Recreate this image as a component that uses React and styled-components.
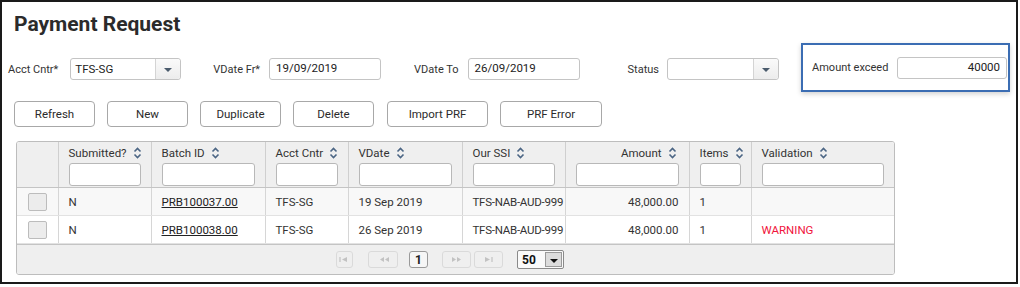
import React from "react";
import styled, { createGlobalStyle } from "styled-components";

const GlobalStyle = createGlobalStyle`
  body {
    margin: 0;
    background: #fff;
    font-family: Roboto, "Liberation Sans", sans-serif;
    color: #333;
  }
`;

const Frame = styled.div`
  width: 1018px;
  height: 284px;
  border: 2px solid #1a1a1a;
  box-sizing: border-box;
  padding: 0 0 0 6px;
  overflow: hidden;
`;

const Title = styled.h1`
  margin: 9px 0 0 6px;
  font-size: 21px;
  line-height: 26px;
  font-weight: 700;
  color: #2b2b2b;
`;

const FilterRow = styled.div`
  display: flex;
  align-items: flex-start;
  margin-top: 6px;
  height: 49px;
`;

const Field = styled.div`
  display: flex;
  align-items: center;
  gap: ${({ $gap }) => $gap || 9}px;
  margin-left: ${({ $left }) => $left || 0}px;
  margin-top: 15px;
`;

const Label = styled.span`
  font-size: 11px;
  color: #333;
  white-space: nowrap;
`;

const TextBox = styled.div`
  width: ${({ $w }) => $w}px;
  height: 22px;
  box-sizing: border-box;
  border: 1px solid #c4c4c4;
  border-radius: 3px;
  background: #fff;
  font-size: 11.5px;
  line-height: 19px;
  padding: 0 6px;
  text-align: ${({ $right }) => ($right ? "right" : "left")};
  color: #222;
`;

const SelectBox = styled.div`
  width: ${({ $w }) => $w}px;
  height: 22px;
  box-sizing: border-box;
  border: 1px solid #c4c4c4;
  border-radius: 3px;
  background: #fff;
  display: flex;
  font-size: 11.5px;
  color: #222;
`;

const SelectValue = styled.div`
  flex: 1;
  line-height: 20px;
  padding: 0 4px;
`;

const SelectArrow = styled.div`
  width: 24px;
  border-left: 1px solid #d4d4d4;
  background: linear-gradient(#fafafa, #ececec);
  display: flex;
  align-items: center;
  justify-content: center;
  border-radius: 0 3px 3px 0;
  &::after {
    content: "";
    border-left: 4px solid transparent;
    border-right: 4px solid transparent;
    border-top: 4px solid #4a5b6c;
    margin-top: 1px;
  }
`;

const AmountBox = styled.div`
  display: flex;
  align-items: center;
  gap: 9px;
  margin-left: 22px;
  width: 209px;
  height: 49px;
  box-sizing: border-box;
  border: 2px solid #3b6db3;
  padding: 0 1px 0 9px;
  box-shadow: 0 2px 5px rgba(0, 0, 0, 0.18);
`;

const ButtonRow = styled.div`
  display: flex;
  gap: 12px;
  margin: 9px 0 0 6px;
`;

const Button = styled.button`
  width: ${({ $w }) => $w || 81}px;
  height: 26px;
  border: 1px solid #a8a8a8;
  border-radius: 4px;
  background: #fff;
  font-family: Roboto, "Liberation Sans", sans-serif;
  font-size: 11.5px;
  color: #2b2b2b;
  padding: 0;
  margin-right: ${({ $extra }) => $extra || 0}px;
`;

const TableWrap = styled.div`
  width: 879px;
  margin: 14px 0 0 8px;
  border: 1px solid #bdbdbd;
  border-radius: 3px;
  box-sizing: border-box;
  overflow: hidden;
`;

const Table = styled.table`
  width: 100%;
  border-collapse: collapse;
  table-layout: fixed;
  font-size: 11.5px;
`;

const HeadCell = styled.th`
  background: #efefef;
  border-left: 1px solid #cfcfcf;
  border-bottom: 1px solid #c4c4c4;
  height: 45px;
  padding: 0 10px 0 10px;
  font-weight: 400;
  vertical-align: top;
  text-align: ${({ $right }) => ($right ? "right" : "left")};
  color: #333;
  &:first-child {
    border-left: none;
  }
`;

const HeadLabel = styled.div`
  display: flex;
  align-items: center;
  gap: 6px;
  justify-content: ${({ $right }) => ($right ? "flex-end" : "flex-start")};
  height: 14px;
  margin-top: 4px;
  white-space: nowrap;
  padding-right: ${({ $right }) => ($right ? 2 : 0)}px;
  svg {
    flex-shrink: 0;
  }
`;

const HeadInput = styled.div`
  height: 23px;
  margin-top: 3px;
  box-sizing: border-box;
  border: 1px solid #b8b8b8;
  border-radius: 3px;
  background: #fff;
`;

const Row = styled.tr`
  background: ${({ $alt }) => ($alt ? "#f8f8f8" : "#fff")};
`;

const Cell = styled.td`
  height: 27px;
  padding: 0 ${({ $tight }) => ($tight ? 0 : 10)}px 0 10px;
  letter-spacing: ${({ $tight }) => ($tight ? "-0.25px" : "normal")};
  border-left: 1px solid #d6d6d6;
  border-bottom: 1px solid #e2e2e2;
  text-align: ${({ $right }) => ($right ? "right" : "left")};
  color: ${({ $warn }) => ($warn ? "#f0143c" : "#333")};
  white-space: nowrap;
  overflow: hidden;
  &:first-child {
    border-left: none;
  }
`;

const Check = styled.div`
  width: 17px;
  height: 16px;
  margin-left: 1px;
  border: 1px solid #bcbcbc;
  border-radius: 2px;
  background: #ececec;
`;

const BatchLink = styled.span`
  text-decoration: underline;
  color: #222;
`;

const Footer = styled.div`
  height: 29px;
  background: #efefef;
  border-top: 1px solid #c4c4c4;
  display: flex;
  align-items: center;
  padding-left: 319px;
`;

const PageBtn = styled.div`
  width: ${({ $w }) => $w}px;
  height: 17px;
  margin-right: ${({ $mr }) => $mr}px;
  box-sizing: border-box;
  border: 1px solid ${({ $active }) => ($active ? "#9a9a9a" : "#dadada")};
  border-radius: 3px;
  background: ${({ $active }) => ($active ? "#f6f6f6" : "#efefef")};
  display: flex;
  align-items: center;
  justify-content: center;
  font-size: 12px;
  font-weight: 700;
  color: ${({ $active }) => ($active ? "#222" : "#c2c2c2")};
`;

const PageSize = styled.div`
  width: 47px;
  height: 19px;
  box-sizing: border-box;
  border: 1px solid #8a8a8a;
  border-radius: 2px;
  background: #fafafa;
  display: flex;
  align-items: center;
  font-size: 12px;
  font-weight: 700;
  color: #111;
`;

const PageSizeValue = styled.span`
  flex: 1;
  padding-left: 4px;
`;

const PageSizeArrow = styled.div`
  width: 17px;
  height: 15px;
  margin-right: 1px;
  border: 1px solid #9a9a9a;
  background: #dcdcdc;
  box-sizing: border-box;
  display: flex;
  align-items: center;
  justify-content: center;
  &::after {
    content: "";
    border-left: 4px solid transparent;
    border-right: 4px solid transparent;
    border-top: 4px solid #111;
    margin-top: 2px;
  }
`;

const SortIcon = () => (
  <svg width="9" height="12" viewBox="0 0 9 12" fill="none" stroke="#4b6584" strokeWidth="1.6">
    <polyline points="1.5,4.5 4.5,1.5 7.5,4.5" />
    <polyline points="1.5,7.5 4.5,10.5 7.5,7.5" />
  </svg>
);

const PagerGlyph = ({ type }) => {
  const paths = {
    first: <><line x1="2" y1="2" x2="2" y2="7" /><polygon points="9,2 4,4.5 9,7" fill="#c2c2c2" stroke="none" /></>,
    prev: <><polygon points="7,2 3,4.5 7,7" fill="#c2c2c2" stroke="none" /><polygon points="12,2 8,4.5 12,7" fill="#c2c2c2" stroke="none" /></>,
    next: <><polygon points="2,2 6,4.5 2,7" fill="#c2c2c2" stroke="none" /><polygon points="7,2 11,4.5 7,7" fill="#c2c2c2" stroke="none" /></>,
    last: <><polygon points="3,2 8,4.5 3,7" fill="#c2c2c2" stroke="none" /><line x1="10" y1="2" x2="10" y2="7" /></>,
  };
  return (
    <svg width="13" height="9" viewBox="0 0 13 9" stroke="#c2c2c2" strokeWidth="1.2">
      {paths[type]}
    </svg>
  );
};

const columns = [
  { key: "check", width: 41 },
  { key: "submitted", title: "Submitted?", width: 93 },
  { key: "batch", title: "Batch ID", width: 114 },
  { key: "acct", title: "Acct Cntr", width: 83 },
  { key: "vdate", title: "VDate", width: 114 },
  { key: "ssi", title: "Our SSI", width: 103 },
  { key: "amount", title: "Amount", width: 124, right: true },
  { key: "items", title: "Items", width: 62 },
  { key: "validation", title: "Validation", width: 143 },
];

const rows = [
  { submitted: "N", batch: "PRB100037.00", acct: "TFS-SG", vdate: "19 Sep 2019", ssi: "TFS-NAB-AUD-999", amount: "48,000.00", items: "1", validation: "" },
  { submitted: "N", batch: "PRB100038.00", acct: "TFS-SG", vdate: "26 Sep 2019", ssi: "TFS-NAB-AUD-999", amount: "48,000.00", items: "1", validation: "WARNING" },
];

const App = () => {
  return (
    <Frame>
      <GlobalStyle />
      <Title>Payment Request</Title>
      <FilterRow>
        <Field $gap={12}>
          <Label>Acct Cntr*</Label>
          <SelectBox $w={111}>
            <SelectValue>TFS-SG</SelectValue>
            <SelectArrow />
          </SelectBox>
        </Field>
        <Field $left={32}>
          <Label>VDate Fr*</Label>
          <TextBox $w={112}>19/09/2019</TextBox>
        </Field>
        <Field $left={33}>
          <Label>VDate To</Label>
          <TextBox $w={112}>26/09/2019</TextBox>
        </Field>
        <Field $left={48} $gap={8}>
          <Label>Status</Label>
          <SelectBox $w={112}>
            <SelectValue />
            <SelectArrow />
          </SelectBox>
        </Field>
        <AmountBox>
          <Label>Amount exceed</Label>
          <TextBox $w={111} $right>40000</TextBox>
        </AmountBox>
      </FilterRow>
      <ButtonRow>
        <Button>Refresh</Button>
        <Button>New</Button>
        <Button>Duplicate</Button>
        <Button $extra={1}>Delete</Button>
        <Button $w={101}>Import PRF</Button>
        <Button $w={102}>PRF Error</Button>
      </ButtonRow>
      <TableWrap>
        <Table>
          <colgroup>
            {columns.map((c) => (
              <col key={c.key} style={{ width: c.width }} />
            ))}
          </colgroup>
          <thead>
            <tr>
              {columns.map((c) => (
                <HeadCell key={c.key} $right={c.right}>
                  {c.title && (
                    <>
                      <HeadLabel $right={c.right}>
                        {c.title}
                        <SortIcon />
                      </HeadLabel>
                      <HeadInput />
                    </>
                  )}
                </HeadCell>
              ))}
            </tr>
          </thead>
          <tbody>
            {rows.map((r, i) => (
              <Row key={r.batch} $alt={i === 0}>
                <Cell>
                  <Check />
                </Cell>
                <Cell>{r.submitted}</Cell>
                <Cell>
                  <BatchLink>{r.batch}</BatchLink>
                </Cell>
                <Cell>{r.acct}</Cell>
                <Cell>{r.vdate}</Cell>
                <Cell $tight>{r.ssi}</Cell>
                <Cell $right>{r.amount}</Cell>
                <Cell>{r.items}</Cell>
                <Cell $warn>{r.validation}</Cell>
              </Row>
            ))}
          </tbody>
        </Table>
        <Footer>
          <PageBtn $w={17} $mr={15}><PagerGlyph type="first" /></PageBtn>
          <PageBtn $w={30} $mr={11}><PagerGlyph type="prev" /></PageBtn>
          <PageBtn $w={19} $mr={14} $active>1</PageBtn>
          <PageBtn $w={29} $mr={3}><PagerGlyph type="next" /></PageBtn>
          <PageBtn $w={29} $mr={14}><PagerGlyph type="last" /></PageBtn>
          <PageSize>
            <PageSizeValue>50</PageSizeValue>
            <PageSizeArrow />
          </PageSize>
        </Footer>
      </TableWrap>
    </Frame>
  );
};

export default App;
